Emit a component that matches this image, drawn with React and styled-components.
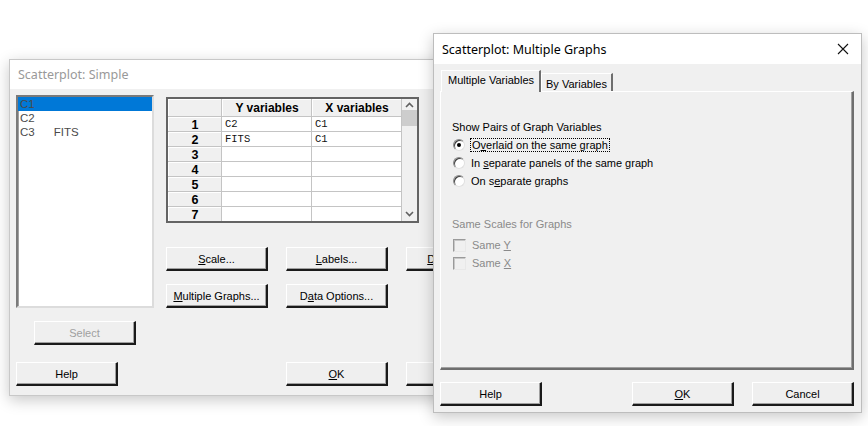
import React from "react";
import styled, { createGlobalStyle } from "styled-components";

const Global = createGlobalStyle`
  html, body { margin: 0; padding: 0; background: #ffffff; }
  body { font-family: "Liberation Sans", Arial, sans-serif; font-size: 11px; color: #000; }
  * { box-sizing: border-box; }
`;

const Desktop = styled.div`
  position: relative;
  width: 868px;
  height: 426px;
  overflow: hidden;
  background: #ffffff;
`;

const Window = styled.div`
  position: absolute;
  left: ${(p) => p.$x}px;
  top: ${(p) => p.$y}px;
  width: ${(p) => p.$w}px;
  height: ${(p) => p.$h}px;
  background: #f0f0f0;
  border: 1px solid ${(p) => (p.$active ? "#bdbdbd" : "#c8c8c8")};
  box-shadow: 0 4px 14px rgba(0, 0, 0, 0.22);
  display: flex;
  flex-direction: column;
  overflow: hidden;
`;

const TitleBar = styled.div`
  height: ${(p) => p.$h}px;
  background: #ffffff;
  display: flex;
  align-items: center;
  justify-content: space-between;
  padding: 0 12px 0 8px;
  font-family: "Noto Sans", "Liberation Sans", sans-serif;
  font-size: 12.5px;
  color: ${(p) => (p.$active ? "#000" : "#999")};
  flex: none;
`;

const Body = styled.div`
  flex: 1;
  padding: ${(p) => p.$pad};
  display: flex;
  flex-direction: column;
`;

const Row = styled.div`
  display: flex;
  align-items: flex-start;
  gap: ${(p) => p.$gap || 0}px;
  margin-top: ${(p) => p.$mt || 0}px;
  margin-left: ${(p) => p.$ml || 0}px;
`;

const Spacer = styled.div`
  flex: none;
  width: ${(p) => p.$w}px;
`;

const Col = styled.div`
  display: flex;
  flex-direction: column;
  flex: none;
  margin-top: ${(p) => p.$mt || 0}px;
`;

const Button = styled.button`
  width: 102px;
  height: 24px;
  margin: 0;
  padding: 0;
  background: #efefef;
  border-top: 1px solid #ffffff;
  border-left: 1px solid #ffffff;
  border-right: 2px solid #1a1a1a;
  border-bottom: 2px solid #1a1a1a;
  box-shadow: inset -1px -1px 0 #a0a0a0;
  font-family: "Liberation Sans", Arial, sans-serif;
  font-size: 11px;
  color: ${(p) => (p.disabled ? "#a0a0a0" : "#000")};
  text-align: center;
  flex: none;
  u { text-decoration: underline; text-underline-offset: 1px; }
`;

const ListBox = styled.div`
  width: 138px;
  height: 213px;
  background: #fff;
  border: 2px solid #7a7a7a;
  border-right-color: #dcdcdc;
  border-bottom-color: #dcdcdc;
  box-shadow: inset 1px 1px 0 #a0a0a0;
  font-family: "Liberation Sans", Arial, sans-serif;
  font-size: 11.5px;
`;

const ListItem = styled.div`
  height: 14px;
  line-height: 14px;
  padding-left: 2px;
  color: #4a4a4a;
  background: ${(p) => (p.$sel ? "#0078d7" : "transparent")};
  display: flex;
  span + span { margin-left: 19px; }
`;

const GridBox = styled.div`
  width: 253px;
  height: 126px;
  border: 2px solid #646464;
  display: flex;
  background: #f0f0f0;
  overflow: hidden;
  flex: none;
`;

const Table = styled.div`
  display: grid;
  grid-template-columns: 53px 89px 89px;
  grid-template-rows: 17px;
  grid-auto-rows: 14px;
  gap: 1px;
  background: #c4c4c4;
  align-content: start;
  height: 100%;
  border-right: 1px solid #c4c4c4;
`;

const HeadCell = styled.div`
  background: #f0f0f0;
  font-weight: bold;
  font-size: ${(p) => (p.$top ? 12 : 12.5)}px;
  text-align: center;
  line-height: ${(p) => (p.$top ? 16 : 14)}px;
  border-top: 1px solid #fff;
  border-left: 1px solid #fff;
`;

const DataCell = styled.div`
  background: #fff;
  font-family: "Liberation Mono", "Courier New", monospace;
  font-size: 10.5px;
  line-height: 14px;
  padding-left: 3px;
  color: #111;
`;

const ScrollBar = styled.div`
  flex: 1;
  display: flex;
  flex-direction: column;
  align-items: center;
  background: #f0f0f0;
  padding: 3px 0 4px;
`;

const Thumb = styled.div`
  width: 15px;
  height: 16px;
  background: #cdcdcd;
  margin-top: 2px;
`;

const Fill = styled.div`
  flex: 1;
`;

const Tabs = styled.div`
  display: flex;
  align-items: flex-end;
  height: 21px;
  position: relative;
  z-index: 1;
  margin-left: 1px;
`;

const Tab = styled.div`
  height: ${(p) => (p.$sel ? 22 : 18)}px;
  padding: ${(p) => (p.$sel ? "3px 5px 0 6px" : "2px 4px 0 4px")};
  margin-bottom: ${(p) => (p.$sel ? -1 : 0)}px;
  background: #f0f0f0;
  border-top: 1px solid #fff;
  border-left: 1px solid #fff;
  border-right: 2px solid #6e6e6e;
  display: flex;
  align-items: ${(p) => (p.$sel ? "flex-start" : "center")};
  font-size: 11px;
`;

const Panel = styled.div`
  width: 414px;
  height: 279px;
  border-top: 1px solid #fff;
  border-left: 1px solid #fff;
  border-right: 2px solid #6e6e6e;
  border-bottom: 2px solid #6e6e6e;
  box-shadow: inset -1px -1px 0 #a0a0a0;
  padding: 28px 0 0 11px;
  display: flex;
  flex-direction: column;
`;

const GroupLabel = styled.div`
  font-size: 11px;
  color: ${(p) => (p.$disabled ? "#8a8a8a" : "#000")};
  height: 15px;
  line-height: 15px;
  margin-top: ${(p) => p.$mt || 0}px;
`;

const OptionRow = styled.label`
  display: flex;
  align-items: center;
  height: 18px;
  gap: 6px;
  font-size: 11px;
  color: ${(p) => (p.$disabled ? "#8a8a8a" : "#000")};
  margin-left: 1px;
  margin-top: ${(p) => p.$mt || 0}px;
  u { text-underline-offset: 1px; }
`;

const Radio = styled.span`
  width: 12px;
  height: 12px;
  border-radius: 50%;
  background: #fff;
  border: 1px solid #8a8a8a;
  border-right-color: #e0e0e0;
  border-bottom-color: #e0e0e0;
  box-shadow: inset 1px 1px 0 #404040;
  display: flex;
  align-items: center;
  justify-content: center;
  flex: none;
  &::after {
    content: "";
    width: 4px;
    height: 4px;
    border-radius: 50%;
    background: ${(p) => (p.$on ? "#000" : "transparent")};
  }
`;

const Check = styled.span`
  width: 13px;
  height: 13px;
  border: 1px solid #9a9a9a;
  border-right-color: #e8e8e8;
  border-bottom-color: #e8e8e8;
  box-shadow: inset 1px 1px 0 #c8c8c8;
  background: #f0f0f0;
  flex: none;
`;

const Focus = styled.span`
  outline: 1px dotted #000;
  padding: 0 1px;
`;

const CloseX = () => (
  <svg width="12" height="12" viewBox="0 0 12 12">
    <path d="M1 1 L11 11 M11 1 L1 11" stroke="#111" strokeWidth="1.1" fill="none" />
  </svg>
);

const Arrow = ({ up }) => (
  <svg width="9" height="6" viewBox="0 0 9 6">
    <path d={up ? "M1 5 L4.5 1.5 L8 5" : "M1 1 L4.5 4.5 L8 1"} stroke="#606060" strokeWidth="1.6" fill="none" />
  </svg>
);

const rows = [
  ["1", "C2", "C1"],
  ["2", "FITS", "C1"],
  ["3", "", ""],
  ["4", "", ""],
  ["5", "", ""],
  ["6", "", ""],
  ["7", "", ""],
];

function SimpleDialog() {
  return (
    <Window $x={9} $y={59} $w={440} $h={337}>
      <TitleBar $h={29}>Scatterplot: Simple</TitleBar>
      <Body $pad="6px 0 0 6px">
        <Row $gap={12}>
          <Col>
            <ListBox>
              <ListItem $sel><span>C1</span></ListItem>
              <ListItem><span>C2</span></ListItem>
              <ListItem><span>C3</span><span>FITS</span></ListItem>
            </ListBox>
            <Row $ml={18} $mt={13}>
              <Button disabled>Select</Button>
            </Row>
          </Col>
          <Col $mt={2}>
            <GridBox>
              <Table>
                <HeadCell $top />
                <HeadCell $top>Y variables</HeadCell>
                <HeadCell $top>X variables</HeadCell>
                {rows.map(([n, y, x]) => (
                  <React.Fragment key={n}>
                    <HeadCell>{n}</HeadCell>
                    <DataCell>{y}</DataCell>
                    <DataCell>{x}</DataCell>
                  </React.Fragment>
                ))}
              </Table>
              <ScrollBar>
                <Arrow up />
                <Thumb />
                <Fill />
                <Arrow />
              </ScrollBar>
            </GridBox>
            <Row $gap={18} $mt={24}>
              <Button><u>S</u>cale...</Button>
              <Button><u>L</u>abels...</Button>
              <Button><u>D</u>ata View...</Button>
            </Row>
            <Row $gap={18} $mt={13}>
              <Button><u>M</u>ultiple Graphs...</Button>
              <Button>D<u>a</u>ta Options...</Button>
            </Row>
          </Col>
        </Row>
        <Row $mt={17}>
          <Button>Help</Button>
          <Spacer $w={168} />
          <Button><u>O</u>K</Button>
          <Spacer $w={18} />
          <Button>Cancel</Button>
        </Row>
      </Body>
    </Window>
  );
}

function MultipleGraphsDialog() {
  return (
    <Window $x={433} $y={33} $w={429} $h={380} $active>
      <TitleBar $h={30} $active>
        <span>Scatterplot: Multiple Graphs</span>
        <CloseX />
      </TitleBar>
      <Body $pad="6px 0 0 6px">
        <Tabs>
          <Tab $sel>Multiple Variables</Tab>
          <Tab>By Variables</Tab>
        </Tabs>
        <Panel>
          <GroupLabel>Show Pairs of Graph Variables</GroupLabel>
          <OptionRow $mt={1}>
            <Radio $on />
            <Focus>O<u>v</u>erlaid on the same graph</Focus>
          </OptionRow>
          <OptionRow>
            <Radio />
            <span>In <u>s</u>eparate panels of the same graph</span>
          </OptionRow>
          <OptionRow>
            <Radio />
            <span>On s<u>e</u>parate graphs</span>
          </OptionRow>
          <GroupLabel $disabled $mt={27}>Same Scales for Graphs</GroupLabel>
          <OptionRow $disabled $mt={4}>
            <Check />
            <span>Same <u>Y</u></span>
          </OptionRow>
          <OptionRow $disabled>
            <Check />
            <span>Same <u>X</u></span>
          </OptionRow>
        </Panel>
        <Row $mt={12}>
          <Button>Help</Button>
          <Spacer $w={90} />
          <Button><u>O</u>K</Button>
          <Spacer $w={18} />
          <Button>Cancel</Button>
        </Row>
      </Body>
    </Window>
  );
}

export default function App() {
  return (
    <>
      <Global />
      <Desktop>
        <SimpleDialog />
        <MultipleGraphsDialog />
      </Desktop>
    </>
  );
}
